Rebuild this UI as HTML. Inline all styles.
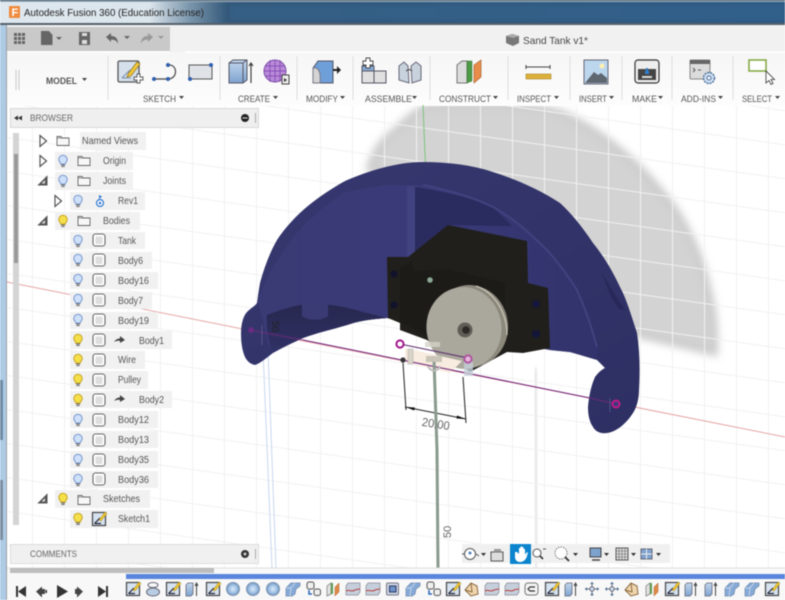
<!DOCTYPE html>
<html><head><meta charset="utf-8"><style>
html,body{margin:0;padding:0;width:785px;height:600px;overflow:hidden;background:#fff}
svg{display:block;filter:blur(.45px)}
text{font-family:"Liberation Sans",sans-serif}
.t{font-size:10px;fill:#555}
.l{font-size:9.500px;fill:#555}
</style></head><body>
<svg width="785" height="600" viewBox="0 0 785 600" xmlns="http://www.w3.org/2000/svg">
<defs>
<linearGradient id="tb" x1="0" x2="1" y1="0" y2="0"><stop offset="0" stop-color="#dfe8ef"/><stop offset=".19" stop-color="#dbe5ec"/><stop offset=".24" stop-color="#7d98ad"/><stop offset=".29" stop-color="#33587a"/><stop offset="1" stop-color="#2d5a84"/></linearGradient>
<linearGradient id="tool" x1="0" x2="0" y1="0" y2="1"><stop offset="0" stop-color="#f6f6f6"/><stop offset="1" stop-color="#fdfdfd"/></linearGradient>
<linearGradient id="dome" x1="0" x2="1" y1="0" y2="1"><stop offset="0" stop-color="#37386f"/><stop offset="1" stop-color="#2e2f63"/></linearGradient>
<linearGradient id="inner" x1="0" x2="1" y1="0" y2="0"><stop offset="0" stop-color="#3a3b75"/><stop offset=".5" stop-color="#393a78"/><stop offset="1" stop-color="#32336c"/></linearGradient>
<linearGradient id="low" x1="0" x2="0" y1="0" y2="1"><stop offset="0" stop-color="#27274f"/><stop offset="1" stop-color="#313266"/></linearGradient>
<linearGradient id="blue" x1="0" x2="0" y1="0" y2="1"><stop offset="0" stop-color="#c4d8ee"/><stop offset="1" stop-color="#7ea3cf"/></linearGradient>
<radialGradient id="sph"><stop offset="0" stop-color="#dbe9f8"/><stop offset=".65" stop-color="#9dbfe4"/><stop offset="1" stop-color="#6f8fb5"/></radialGradient>
<pattern id="grid" width="32" height="34" patternUnits="userSpaceOnUse" patternTransform="skewY(8)"><path d="M.5 0V34M0 .5H32" stroke="#f1f1f1" fill="none"/></pattern>
<filter id="bl" x="-10%" y="-10%" width="120%" height="120%"><feGaussianBlur stdDeviation="4"/></filter>
<filter id="b2"><feGaussianBlur stdDeviation="1.500"/></filter>

<g id="bulbB" transform="translate(0 1.500)"><path d="M-4.200-3a4.200 4.200 0 1 1 8.400 0c0 2-1.700 2.600-1.900 4.500h-4.600C-2.500-.4-4.200-1-4.200-3z" fill="#cfe0fa" stroke="#7f9fd0" stroke-width="1.100"/><path d="M-2 2.500h4M-1.700 4h3.400" stroke="#666" stroke-width="1.100"/></g>
<g id="bulbY" transform="translate(0 1.500)"><path d="M-4.200-3a4.200 4.200 0 1 1 8.400 0c0 2-1.700 2.600-1.900 4.500h-4.600C-2.500-.4-4.200-1-4.200-3z" fill="#f6e04a" stroke="#c9a92a" stroke-width="1.100"/><path d="M-2 2.500h4M-1.700 4h3.400" stroke="#666" stroke-width="1.100"/></g>
<g id="fold"><path d="M-6-4.500h4l1 1.500h7v7.500h-12z" fill="#f7f7f7" stroke="#666" stroke-width=".9"/><path d="M-6-3h5" stroke="#666" stroke-width=".7"/></g>
<g id="body"><rect x="-6" y="-6" width="12" height="12" rx="2.500" fill="#fff" stroke="#666" stroke-width="1.100"/><rect x="-3.500" y="-3.500" width="7" height="7.500" rx="1" fill="#dedede"/></g>
<g id="tri"><path d="M-3-5.500L3.500 0L-3 5.500z" fill="#fff" stroke="#555" stroke-width="1.200"/></g>
<g id="tdn"><path d="M4-4.500V4H-4.500z" fill="#555" stroke="#555"/><path d="M2-1V2.500H-1.500z" fill="#ddd"/></g>
<g id="arr"><path d="M-6 2C-4-1-2-1.500 0-1.500V-4L5 0 0 3V1C-2 .5-4 1-6 2z" fill="#444"/></g>

<g id="sk"><rect x="-6.500" y="-6.500" width="13" height="13" fill="#d5e2f0" stroke="#444" stroke-width="1.200"/><path d="M-4.500 4.500L1 -1M-4.500 4.500H2" stroke="#223" stroke-width="1.200" fill="none"/><path d="M0 1L6-7l2 1.500L2 2z" fill="#f0c832" stroke="#9a7a14" stroke-width=".5"/></g>
<g id="ex"><path d="M-6-4l2-2h5v11l-2 2h-5z" fill="url(#blue)" stroke="#667" stroke-width=".8"/><path d="M4.500 7V-5M3-3l1.500-3 1.500 3" stroke="#444" fill="none"/></g>
<g id="lf"><ellipse cx="0" cy="-4" rx="5" ry="2.500" fill="none" stroke="#667"/><ellipse cx="0" cy="3" rx="6.500" ry="4" fill="#b8cde4" stroke="#667"/></g>
<g id="sp"><circle r="6.500" fill="url(#sph)" stroke="#7d95b5"/></g>
<g id="ch"><path d="M-7-1l5-5h9v3l-4 3-1 5-3 2h-6z" fill="#86a9d6" stroke="#6b86aa" stroke-width=".7"/><path d="M-7-1h5l4-5M-2-1l-1 8" stroke="#d8e4f2" stroke-width=".7" fill="none"/></g>
<g id="jn"><rect x="-6" y="-7" width="7" height="7" rx="2" fill="#eee" stroke="#555"/><rect x="1" y="0" width="6.500" height="6.500" rx="2" fill="#eee" stroke="#555"/><path d="M-4 1v4h3" stroke="#2a66b8" stroke-width="1.500" fill="none"/></g>
<g id="cn"><path d="M-6-3l4-3v11l-4 2z" fill="#e2e2e2" stroke="#777" stroke-width=".7"/><path d="M-2-6h2v11h-2z" fill="#5e9e52"/><path d="M2 7V-2l4-4v9z" fill="#e08a48" stroke="#a8642c" stroke-width=".5"/></g>
<g id="rb"><path d="M-7-3l2-3h12v9l-2 3H-7z" fill="#c5cfdb" stroke="#889" stroke-width=".7"/><path d="M-7 2c3-2 5 1 8-.5s4-1 6-1.500" stroke="#b84040" fill="none"/></g>
<g id="sq"><rect x="-6.500" y="-6" width="12" height="12" rx="1.500" fill="#c9d4e2" stroke="#778"/><rect x="-3.500" y="-3" width="6.500" height="6" fill="#6b93c8" stroke="#336"/></g>
<g id="or"><path d="M-7 1l6-7 6 3 1 8-7 2z" fill="#f0d6ae" stroke="#8a6a40"/><path d="M-1-6l1 9-7-2" stroke="#8a6a40" fill="none"/></g>
<g id="ab"><rect x="-7" y="-6" width="13" height="12" rx="3" fill="#f4f4f4" stroke="#777"/><path d="M3-2h-5l-2 2 2 2h5" stroke="#333" stroke-width="1.200" fill="none"/></g>
<g id="mv"><path d="M-7 0H7M0-7V7" stroke="#667" stroke-width="1"/><path d="M-7 0l2-2v4zM7 0L5-2v4zM0-7l-2 2h4zM0 7l-2-2h4z" fill="#4f6f96"/><circle r="2.200" fill="#cfdff0" stroke="#667"/></g>
</defs>

<!-- window frame -->
<rect width="785" height="600" fill="#fff"/>
<rect width="7" height="600" fill="#aecbe6"/>
<rect y="380" width="3" height="60" fill="#6e8aa4"/>
<rect y="480" width="3" height="60" fill="#7a8ea2"/>
<rect x="6" y="24" width="1" height="576" fill="#9a9fa5"/>
<!-- title bar -->
<rect width="785" height="24" fill="url(#tb)"/>
<rect width="785" height="1" fill="#2d4558"/>
<rect y="1" width="785" height="1" fill="#a7bccb"/>
<rect x="230" y="5" width="555" height="15" fill="#3a6c98" opacity=".35" filter="url(#b2)"/>
<rect y="23" width="785" height="2" fill="#55606a"/>
<rect x="9" y="6" width="11" height="12" rx="1" fill="#f08a3c"/>
<text x="11.500" y="16" style="font-size:11px;font-weight:bold;fill:#fff">F</text>
<text x="24" y="16" textLength="180" lengthAdjust="spacingAndGlyphs" style="font-size:10.500px;fill:#222">Autodesk Fusion 360 (Education License)</text>

<!-- app bar -->
<rect x="7" y="25" width="778" height="28" fill="#f1f1f1"/>
<rect x="7" y="27" width="163" height="24" fill="#c9c9c9"/>
<rect x="7" y="52" width="778" height="54" fill="url(#tool)"/>
<path d="M7 52H170M185 52H785" stroke="#fff" stroke-width="1.500"/>
<!-- QAT icons -->
<g fill="#666">
<path d="M14 33h3v3h-3zM18 33h3v3h-3zM22 33h3v3h-3zM14 37h3v3h-3zM18 37h3v3h-3zM22 37h3v3h-3zM14 41h3v3h-3zM18 41h3v3h-3zM22 41h3v3h-3z"/>
<path d="M41 31h8l3.500 4v10H41z"/>
<path d="M56 37h6l-3 3z"/>
<path d="M79 32h11v13H79z"/>
<rect x="82" y="33" width="5" height="3" fill="#ddd"/>
<rect x="82" y="40" width="5" height="4" fill="#ddd"/>
<path d="M106 37l5-4v3c5 0 7 3 7 8-1-3-3-4.500-7-4.500v2.500z"/>
<path d="M124 36h6l-3 3z"/>
</g>
<g fill="#999"><path d="M153 37l-5-4v3c-5 0-7 3-7 8 1-3 3-4.500 7-4.500v2.500z"/><path d="M158 36h6l-3 3z"/></g>
<!-- doc title -->
<path d="M506 36l6-2 7 2v7l-6 3-7-3z" fill="#777"/><path d="M506 36l7 2 6-2-6-2z" fill="#aaa"/>
<text x="523" y="44" textLength="65" lengthAdjust="spacingAndGlyphs" style="font-size:10.500px;fill:#444">Sand Tank v1*</text>

<!-- toolbar -->
<path d="M16 70v20M19 70v20" stroke="#c8c8c8"/>
<text x="46" y="84" textLength="31" lengthAdjust="spacingAndGlyphs" style="font-size:9px;font-weight:bold;fill:#555">MODEL</text>
<path d="M82 78h5l-2.500 3z" fill="#444"/>
<g stroke="#ddd"><path d="M108 56v44M220 56v44M297 56v44M353 56v44M430 56v44M508 56v44M570 56v44M622 56v44M672 56v44M733 56v44"/></g>

<g class="tb">
<rect x="118" y="61" width="21" height="21" rx="1.500" fill="#d5e0ec" stroke="#555" stroke-width="1.300"/>
<path d="M122 78l8-8M122 78h9" stroke="#7a8ea8" fill="none"/>
<path d="M128 74l9-12 3 2-9 12-4 1z" fill="#f2c93a" stroke="#8a6d14" stroke-width=".7"/>
<path d="M134 77h3v-3h3v3h3v3h-3v3h-3v-3h-3z" fill="#fff" stroke="#555" stroke-width=".9"/>
<path d="M154 79h14M168 65c10-1 10 14 0 14" stroke="#444" stroke-width="1.200" fill="none"/>
<circle cx="154" cy="79" r="2" fill="#2f5fb0"/><circle cx="168" cy="65" r="2" fill="#2f5fb0"/><circle cx="168" cy="79" r="2" fill="#2f5fb0"/>
<rect x="189" y="65" width="23" height="14" fill="#dfe3e8" stroke="#555"/><circle cx="190" cy="79" r="2" fill="#2f5fb0"/><circle cx="211" cy="65" r="2" fill="#2f5fb0"/>
<path d="M229 63l4-3h14v20l-4 3h-14z" fill="url(#blue)" stroke="#556" stroke-width="1"/><path d="M229 63h14v20M243 63l4-3" fill="none" stroke="#556"/>
<path d="M251 83V63M249 66l2-3 2 3" stroke="#333" fill="none" stroke-width="1.100"/>
<circle cx="275" cy="71" r="11" fill="#b88ad8" stroke="#7d4fa8"/><path d="M265 66h20M264 71h22M265 76h20M270 60v22M275 60v22M280 60v22" stroke="#7d3fb0" stroke-width=".7"/>
<rect x="282" y="75" width="7" height="9" fill="#eee" stroke="#444"/><path d="M284 78l3 2-3 2z" fill="#333"/>
<path d="M313 68l5-7h15v22h-20z" fill="#6f9fd8" stroke="#556"/><path d="M313 68c6-1 8 4 7 15h-7z" fill="#d4d4d4" stroke="#778"/>
<path d="M333 69h4v-3l4 4-4 4v-3h-4z" fill="#222"/>
<path d="M362 66h12v12h-12z" fill="#88aad4" stroke="#556"/><path d="M362 71h12v12h-12zM374 71h12v12h-12z" fill="#e0e0e0" stroke="#556"/>
<path d="M363 61h3v-3h4v3h3v4h-3v3h-4v-3h-3z" fill="#fff" stroke="#444" stroke-width=".9"/>
<path d="M399 66l5-4 4 4 1 17-10-3zM411 66l5-4 5 4v14l-9 3z" fill="#c8d2dd" stroke="#667"/>
<path d="M406 71c3-2 4-2 6 0" stroke="#444" fill="none"/>
<path d="M457 65l5-4h5v22h-10z" fill="#dcdcdc" stroke="#777"/><path d="M467 61h5v20l-5 2z" fill="#4f9a46" stroke="#3a7034" stroke-width=".5"/>
<path d="M474 83V65l7-5v17z" fill="#e88c4a" stroke="#a8642c" stroke-width=".7"/>
<path d="M526 67h24" stroke="#444"/><path d="M526 65v4M550 65v4" stroke="#444"/>
<rect x="526" y="74" width="25" height="5" fill="#dcb03a" stroke="#a8852a" stroke-width=".6"/>
<rect x="584" y="60" width="24" height="24" fill="#bcd6ee" stroke="#667"/><path d="M585 83l9-11 4 3 3-2 6 5v5z" fill="#5e6670"/><circle cx="602" cy="66" r="2.500" fill="#fdf0b0"/>
<rect x="635" y="60" width="24" height="23" rx="3" fill="#eee" stroke="#333" stroke-width="1.200"/><rect x="638" y="69" width="18" height="11" fill="#444"/><rect x="642" y="76" width="10" height="2" fill="#ddd"/><path d="M645 71h4v3h-4zM646 68h2v3h-2z" fill="#2f7fd0"/>
<rect x="690" y="60" width="20" height="19" rx="1" fill="#dcdcdc" stroke="#888"/><rect x="690" y="60" width="20" height="4" fill="#666"/>
<path d="M693 68l2 2-2 2M698 70h3" stroke="#555" fill="none"/>
<circle cx="709" cy="78" r="5.500" fill="#cfe0f2" stroke="#466a96" stroke-width="1.400" stroke-dasharray="2 1"/><circle cx="709" cy="78" r="2" fill="#fff" stroke="#466a96"/>
<rect x="749" y="60" width="17" height="11" fill="#fff" stroke="#7fa63c" stroke-width="1.500"/>
<path d="M766 71v12l3-2.500 2 4 2-1-2-4h3.500z" fill="#fff" stroke="#333" stroke-width=".8"/>
</g>

<g class="l">
<text x="143" y="102" textLength="33" lengthAdjust="spacingAndGlyphs">SKETCH</text><path d="M179 96h5l-2.500 3z" fill="#444"/>
<text x="238" y="102" textLength="32" lengthAdjust="spacingAndGlyphs">CREATE</text><path d="M273 96h5l-2.500 3z" fill="#444"/>
<text x="306" y="102" textLength="32" lengthAdjust="spacingAndGlyphs">MODIFY</text><path d="M340 96h5l-2.500 3z" fill="#444"/>
<text x="365" y="102" textLength="47" lengthAdjust="spacingAndGlyphs">ASSEMBLE</text><path d="M412 96h5l-2.500 3z" fill="#444"/>
<text x="439" y="102" textLength="52" lengthAdjust="spacingAndGlyphs">CONSTRUCT</text><path d="M493 96h5l-2.500 3z" fill="#444"/>
<text x="517" y="102" textLength="34" lengthAdjust="spacingAndGlyphs">INSPECT</text><path d="M554 96h5l-2.500 3z" fill="#444"/>
<text x="579" y="102" textLength="28" lengthAdjust="spacingAndGlyphs">INSERT</text><path d="M609 96h5l-2.500 3z" fill="#444"/>
<text x="632" y="102" textLength="25" lengthAdjust="spacingAndGlyphs">MAKE</text><path d="M658 96h5l-2.500 3z" fill="#444"/>
<text x="681" y="102" textLength="35" lengthAdjust="spacingAndGlyphs">ADD-INS</text><path d="M718 96h5l-2.500 3z" fill="#444"/>
<text x="742" y="102" textLength="30" lengthAdjust="spacingAndGlyphs">SELECT</text><path d="M775 96h5l-2.500 3z" fill="#444"/>
</g>

<!-- viewport -->
<rect x="7" y="106" width="778" height="462" fill="#fff"/>
<clipPath id="vp"><rect x="7" y="106" width="778" height="462"/></clipPath>
<g clip-path="url(#vp)">
<path d="M370 168C376 148 384 140 397 130C406 120 416 112 427 107C450 103 470 103 493 103C520 105 540 108 560 113C585 124 608 140 627 157C648 175 664 195 677 213C692 238 702 262 707 287C712 305 715 322 714 352L637 334L480 240Z" fill="#d3d3d3" stroke="#cccccc" stroke-width="8" filter="url(#bl)"/>
<path d="M535 368L537 568" stroke="#e8e8e8" stroke-width="5" filter="url(#b2)"/>
</g>
<rect x="7" y="106" width="778" height="462" fill="url(#grid)"/>
<path d="M7 282L785 437" stroke="#e6a6a6"/>
<path d="M263 350L272 568M268 350L276 568" stroke="#c9d6f0"/>
<path d="M423 105L431 300" stroke="#7cc47c"/>

<!-- dome -->
<path d="M241 333C241 325 243 316 247 312C251 308 255 306 257 303C258 295 259 289 260 283C264 268 270 252 277 240C295 213 320 195 345 181C370 170 398 162 423 162C448 162 472 165 493 172C518 180 540 190 560 203C572 214 583 228 593 243C605 258 613 272 620 287C627 300 631 315 637 333C640 352 640 372 639 390C639 398 637 407 633 413C626 424 616 432 607 433C600 434 595 431 593 427C589 421 588 414 588 407C589 396 591 386 595 377C598 373 601 370 605 368L597 360L570 352L550 350L387 318C372 319 358 321 347 325C330 330 316 333 303 338C292 343 282 348 273 353C266 358 261 363 255 365C250 364 247 361 245 357C242 350 241 342 241 333Z" fill="url(#dome)"/>
<!-- inner surface -->
<path d="M258 300C268 272 282 252 297 233C310 218 326 205 343 193C358 189 372 187 387 185C400 185 412 185 423 185C448 190 472 197 493 207C513 218 530 233 547 250C558 262 568 276 577 290C585 308 592 328 597 347L597 358L570 352L550 350L387 318C372 319 358 321 347 325C330 330 316 333 303 338C290 344 278 350 268 345C266 335 262 316 258 300Z" fill="url(#inner)"/>
<!-- dark bottom inner -->
<path d="M267 315C280 310 290 307 300 305L330 305C342 306 352 309 363 312L387 318C372 319 358 321 347 325C330 330 316 333 303 338C292 343 282 348 272 351C268 340 266 325 267 315Z" fill="url(#low)"/>
<path d="M302 305h26v11c-6 5-20 5-26 0z" fill="#3a3b74"/>
<!-- inner panel -->
<path d="M407 186h8v68l-8 4z" fill="#414280"/>
<path d="M415 187C440 191 470 197 493 207L512 226L448 225L415 254Z" fill="#2a2b5e"/>
<path d="M423 185C448 190 472 197 493 207C513 218 530 233 547 250C558 262 568 276 577 290C585 308 592 328 597 347" stroke="#41427f" stroke-width="2" fill="none"/>
<path d="M601 271L616 296L625 310L619 309L611 297Z" fill="#28295a"/>
<!-- servo -->
<path d="M387 257L408 257L448 225L527 241L528 283L548 288L550 348L523 353L507 352L470 372L427 340L400 330V323L388 318Z" fill="#201f1b"/>
<path d="M400 268L412 261L413 271L447 269L505 283V340L470 365L427 335L400 322Z" fill="#1c1b18"/>
<circle cx="394" cy="274" r="3.500" fill="#11122c"/><circle cx="394" cy="305" r="3.500" fill="#11122c"/>
<circle cx="536" cy="304" r="4" fill="#14153a"/><circle cx="536" cy="334" r="4" fill="#14153a"/>
<!-- disc -->
<ellipse cx="470" cy="326" rx="38" ry="41" transform="rotate(-8 470 326)" fill="#8c887c"/>
<path d="M476 286C494 292 507 312 507 335" stroke="#c9c5b8" stroke-width="1.200" fill="none"/>
<ellipse cx="464" cy="328" rx="37.500" ry="41" transform="rotate(-8 464 328)" fill="#aaa79d"/>
<circle cx="465" cy="330" r="7.500" fill="#5f5d56"/><circle cx="466" cy="330" r="3.800" fill="#2b2a27"/>

<!-- sketch geometry -->
<path d="M405 348L462 361L450 373L405 362Z" fill="#f8ebdf"/>
<path d="M303 340L590 398" stroke="#6e1f78" stroke-width="1"/>
<path d="M250 330L303 340M590 398L616 404" stroke="#7a2a80" stroke-width="1.500" opacity=".55"/>
<path d="M400 344L468 358" stroke="#5a2a6a"/>
<path d="M403 363L406 410M463 377L466 423" stroke="#333" stroke-width="1.100"/>
<path d="M405 407L466 419" stroke="#222"/>
<path d="M406 407l9 .5-1 3zM466 419l-9-3.500-.5 3z" fill="#111"/>
<path d="M434 360L437 450L438 568" stroke="#8a9a8e" stroke-width="3"/>
<rect x="408" y="349" width="5" height="15" fill="#d9d4c8" stroke="#aaa" stroke-width=".5"/>
<rect x="426" y="356" width="16" height="6" fill="#c8c4b8"/>
<rect x="425" y="342" width="15" height="5" fill="#d5d2c8" opacity=".8"/>
<path d="M428 366c2 6 10 6 12 0" stroke="#bbb" stroke-width="2" fill="none"/>
<rect x="464" y="362" width="9" height="14" fill="#c5cfda" opacity=".8"/>
<circle cx="400" cy="344" r="3.600" fill="#fff" stroke="#a3168a" stroke-width="2"/>
<circle cx="468" cy="359" r="3.600" fill="#e5b8de" stroke="#b0559f" stroke-width="2"/>
<circle cx="403" cy="360" r="2.600" fill="#333"/>
<circle cx="430" cy="280" r="2.800" fill="#8da895"/>
<circle cx="616" cy="404" r="3.500" fill="#3a3a7a" stroke="#c01a8a" stroke-width="2"/>
<circle cx="251" cy="330" r="3" fill="#7a2a8a" opacity=".7"/>
<path d="M610 398V412M262 325V345" stroke="#6a6aa0" opacity=".6"/>
<text x="422" y="428" transform="rotate(9 436 423)" textLength="28" lengthAdjust="spacingAndGlyphs" style="font-size:12px;fill:#666">20.00</text>
<text x="0" y="0" transform="translate(272 321) rotate(90)" style="font-size:10px;fill:#222">50</text>
<text x="0" y="0" transform="translate(451 538) rotate(-90)" style="font-size:11px;fill:#666">50</text>

<!-- browser panel -->
<rect x="10.500" y="108.500" width="248" height="19" fill="#efefef" stroke="#d9d9d9"/>
<path d="M14 118l4-2.500v5zM18 118l4-2.500v5z" fill="#333"/>
<text x="30" y="121" textLength="43" lengthAdjust="spacingAndGlyphs" style="font-size:9.500px;fill:#666">BROWSER</text>
<circle cx="245" cy="118" r="4" fill="#222"/><path d="M242.500 118h5" stroke="#ddd"/>
<path d="M255.500 113v10" stroke="#aaa"/>
<rect x="13" y="133" width="6" height="392" fill="#d4d4d4"/>
<rect x="14" y="154" width="4" height="109" fill="#9a9a9a"/>

<g fill="#f1f1f1">
<rect x="80" y="132" width="66" height="18"/>
<rect x="55" y="152" width="78" height="18"/>
<rect x="55" y="172" width="78" height="18"/>
<rect x="70" y="192" width="75" height="18"/>
<rect x="55" y="212" width="85" height="18"/>
<rect x="70" y="232" width="75" height="17"/>
<rect x="70" y="252" width="82" height="17"/>
<rect x="70" y="272" width="88" height="17"/>
<rect x="70" y="292" width="82" height="17"/>
<rect x="70" y="312" width="88" height="17"/>
<rect x="70" y="331" width="102" height="18"/>
<rect x="70" y="351" width="75" height="18"/>
<rect x="70" y="371" width="78" height="18"/>
<rect x="70" y="391" width="102" height="17"/>
<rect x="70" y="411" width="88" height="17"/>
<rect x="70" y="431" width="88" height="17"/>
<rect x="70" y="451" width="88" height="17"/>
<rect x="70" y="471" width="88" height="17"/>
<rect x="55" y="490" width="95" height="18"/>
<rect x="70" y="510" width="88" height="18"/>
</g>
<use href="#tri" x="43" y="141"/><use href="#fold" x="63" y="141"/><text class="t" x="82" y="144" textLength="56" lengthAdjust="spacingAndGlyphs">Named Views</text>
<use href="#tri" x="43" y="161"/><use href="#bulbB" x="63" y="161"/><use href="#fold" x="84" y="161"/><text class="t" x="103" y="164" textLength="23" lengthAdjust="spacingAndGlyphs">Origin</text>
<use href="#tdn" x="43" y="181"/><use href="#bulbB" x="63" y="181"/><use href="#fold" x="84" y="181"/><text class="t" x="103" y="184" textLength="23" lengthAdjust="spacingAndGlyphs">Joints</text>
<use href="#tri" x="58" y="201"/><use href="#bulbB" x="78" y="201"/>
<circle cx="100" cy="203" r="3.500" fill="#fff" stroke="#2f78d0" stroke-width="1.200"/><circle cx="100" cy="203" r="1.300" fill="#2f78d0"/><path d="M99 199v-4l3 1.500z" fill="#2f78d0"/>
<text class="t" x="118" y="204" textLength="20" lengthAdjust="spacingAndGlyphs">Rev1</text>
<use href="#tdn" x="43" y="221"/><use href="#bulbY" x="63" y="221"/><use href="#fold" x="84" y="221"/><text class="t" x="103" y="224" textLength="27" lengthAdjust="spacingAndGlyphs">Bodies</text>

<use href="#bulbB" x="78" y="241"/><use href="#body" x="99" y="240"/><text class="t" x="118" y="244" textLength="18" lengthAdjust="spacingAndGlyphs">Tank</text>
<use href="#bulbB" x="78" y="260"/><use href="#body" x="99" y="260"/><text class="t" x="118" y="264" textLength="25" lengthAdjust="spacingAndGlyphs">Body6</text>
<use href="#bulbB" x="78" y="280"/><use href="#body" x="99" y="280"/><text class="t" x="118" y="284" textLength="31" lengthAdjust="spacingAndGlyphs">Body16</text>
<use href="#bulbB" x="78" y="300"/><use href="#body" x="99" y="300"/><text class="t" x="118" y="304" textLength="25" lengthAdjust="spacingAndGlyphs">Body7</text>
<use href="#bulbB" x="78" y="320"/><use href="#body" x="99" y="320"/><text class="t" x="118" y="324" textLength="31" lengthAdjust="spacingAndGlyphs">Body19</text>
<use href="#bulbY" x="78" y="340"/><use href="#body" x="99" y="340"/><use href="#arr" x="120" y="340"/><text class="t" x="139" y="344" textLength="25" lengthAdjust="spacingAndGlyphs">Body1</text>
<use href="#bulbY" x="78" y="360"/><use href="#body" x="99" y="360"/><text class="t" x="118" y="363" textLength="18" lengthAdjust="spacingAndGlyphs">Wire</text>
<use href="#bulbY" x="78" y="380"/><use href="#body" x="99" y="380"/><text class="t" x="118" y="383" textLength="23" lengthAdjust="spacingAndGlyphs">Pulley</text>
<use href="#bulbY" x="78" y="400"/><use href="#body" x="99" y="400"/><use href="#arr" x="120" y="399"/><text class="t" x="139" y="403" textLength="25" lengthAdjust="spacingAndGlyphs">Body2</text>
<use href="#bulbB" x="78" y="420"/><use href="#body" x="99" y="420"/><text class="t" x="118" y="423" textLength="31" lengthAdjust="spacingAndGlyphs">Body12</text>
<use href="#bulbB" x="78" y="440"/><use href="#body" x="99" y="440"/><text class="t" x="118" y="443" textLength="31" lengthAdjust="spacingAndGlyphs">Body13</text>
<use href="#bulbB" x="78" y="460"/><use href="#body" x="99" y="460"/><text class="t" x="118" y="463" textLength="31" lengthAdjust="spacingAndGlyphs">Body35</text>
<use href="#bulbB" x="78" y="480"/><use href="#body" x="99" y="479"/><text class="t" x="118" y="483" textLength="31" lengthAdjust="spacingAndGlyphs">Body36</text>
<use href="#tdn" x="43" y="499"/><use href="#bulbY" x="63" y="499"/><use href="#fold" x="84" y="500"/><text class="t" x="103" y="502" textLength="37" lengthAdjust="spacingAndGlyphs">Sketches</text>
<use href="#bulbY" x="78" y="519"/><use href="#sk" x="99" y="519"/><text class="t" x="118" y="522" textLength="32" lengthAdjust="spacingAndGlyphs">Sketch1</text>

<!-- comments -->
<rect x="10.500" y="544.500" width="248" height="19" fill="#f0f0f0" stroke="#dcdcdc"/>
<text x="30" y="557" textLength="47" lengthAdjust="spacingAndGlyphs" style="font-size:9.500px;fill:#666">COMMENTS</text>
<circle cx="245" cy="554" r="4" fill="#333"/><circle cx="245" cy="554" r="1.500" fill="#ccc"/>
<path d="M255.500 549v10" stroke="#aaa"/>

<!-- nav bar -->
<rect x="462" y="544" width="208" height="19" fill="#f0f0f0"/>
<rect x="510" y="544" width="21" height="20" fill="#0b84cd"/>
<path d="M515 552v5c0 3 2 5 5 5s6-2 7-6l1-4-2 1-1 2v-6h-1.500v4-6h-1.500v6-6.500h-1.500v6.500-5h-1.500v6l-2-2z" fill="#fff"/>
<circle cx="470" cy="554" r="5.500" fill="#fff" stroke="#555"/><path d="M464 554h-2M476 554l3 2" stroke="#555"/><circle cx="470" cy="553" r="1.500" fill="#4f7fb8"/>
<path d="M481 553h5l-2.500 3z" fill="#333"/>
<rect x="491" y="552" width="12" height="9" fill="#ddd" stroke="#555"/><rect x="494" y="549" width="7" height="3" fill="#999"/>
<circle cx="537" cy="553" r="4" fill="#fff" stroke="#555"/><path d="M540 556l3 3" stroke="#333" stroke-width="1.600"/><path d="M543 549h3" stroke="#555"/>
<circle cx="561" cy="553" r="6" fill="#fff" stroke="#777" stroke-dasharray="1.500 1"/><path d="M565 557l4 4" stroke="#333" stroke-width="1.800"/>
<path d="M573 553h5l-2.500 3z" fill="#333"/>
<rect x="590" y="548" width="11" height="9" fill="#7ea3cf" stroke="#444"/><path d="M592 560h8" stroke="#444" stroke-width="1.500"/>
<path d="M604 553h5l-2.500 3z" fill="#333"/>
<rect x="616" y="548" width="12" height="12" fill="#ddd" stroke="#555"/><path d="M619 548v12M622 548v12M625 548v12M616 551h12M616 554h12M616 557h12" stroke="#666" stroke-width=".6"/>
<path d="M631 553h5l-2.500 3z" fill="#333"/>
<rect x="641" y="549" width="11" height="10" fill="#7ea3cf" stroke="#667"/><path d="M646.500 549v10M641 554h11" stroke="#eee"/>
<path d="M656 553h5l-2.500 3z" fill="#333"/>

<!-- timeline -->
<rect x="7" y="568" width="778" height="32" fill="#f8f8f8"/>
<path d="M7 568H785" stroke="#ddd"/>
<rect x="10" y="568" width="204" height="5" fill="#bdbdbd"/>
<rect x="126" y="574" width="659" height="5" fill="#5a85dc"/>
<g fill="#333">
<path d="M16 586h2v11h-2zM26 586v11l-8-5.500z"/>
<path d="M36 591.500l6-5v11zM42 589h3v5h-3z" fill="#444"/><path d="M45.500 590h1.500v3h-1.500z"/>
<path d="M57 585l11 6.500-11 6.500z"/>
<path d="M83 591.500l-6-5v11zM77 589h-2v5h2z" fill="#444"/>
<path d="M98 586v11l8-5.500zM106 586h2v11h-2z"/>
</g>
<use href="#sk" x="133" y="589"/><use href="#lf" x="153" y="589"/><use href="#sk" x="173" y="589"/><use href="#ex" x="192" y="589"/><use href="#sk" x="213" y="589"/>
<use href="#sp" x="233" y="589"/><use href="#sp" x="253" y="589"/><use href="#sp" x="273" y="589"/><use href="#ch" x="293" y="589"/><use href="#jn" x="313" y="589"/>
<use href="#cn" x="333" y="589"/><use href="#rb" x="353" y="589"/><use href="#rb" x="373" y="589"/><use href="#sq" x="393" y="589"/><use href="#ch" x="413" y="589"/>
<use href="#jn" x="433" y="589"/><use href="#sk" x="453" y="589"/><use href="#or" x="472" y="589"/><use href="#rb" x="492" y="589"/><use href="#rb" x="512" y="589"/>
<use href="#ab" x="532" y="589"/><use href="#sk" x="552" y="589"/><use href="#ex" x="571" y="589"/><use href="#mv" x="592" y="589"/><use href="#mv" x="612" y="589"/>
<use href="#or" x="632" y="589"/><use href="#cn" x="652" y="589"/><use href="#sk" x="672" y="589"/><use href="#ex" x="691" y="589"/><use href="#ex" x="711" y="589"/>
<use href="#ch" x="732" y="589"/><use href="#ch" x="752" y="589"/><use href="#sk" x="772" y="589"/>
</svg>
</body></html>
